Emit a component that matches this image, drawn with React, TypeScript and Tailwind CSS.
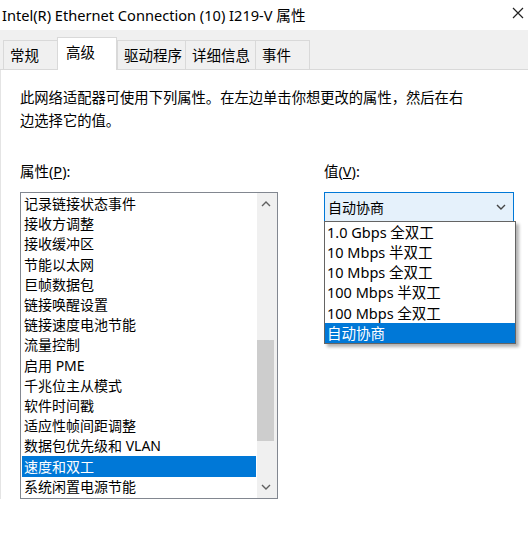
import type { FC } from 'react';

const font = { fontFamily: '"Noto Sans", "Noto Sans CJK SC", sans-serif' };

const tabs = [
  { label: '常规', w: 'w-[54px]' },
  { label: '高级', w: 'w-[60px]', active: true },
  { label: '驱动程序', w: 'w-[68px]' },
  { label: '详细信息', w: 'w-[70px]' },
  { label: '事件', w: 'w-[55px]' },
];

const properties = [
  '记录链接状态事件',
  '接收方调整',
  '接收缓冲区',
  '节能以太网',
  '巨帧数据包',
  '链接唤醒设置',
  '链接速度电池节能',
  '流量控制',
  '启用 PME',
  '千兆位主从模式',
  '软件时间戳',
  '适应性帧间距调整',
  '数据包优先级和 VLAN',
  '速度和双工',
  '系统闲置电源节能',
];

const values = [
  '1.0 Gbps 全双工',
  '10 Mbps 半双工',
  '10 Mbps 全双工',
  '100 Mbps 半双工',
  '100 Mbps 全双工',
  '自动协商',
];

const Chevron: FC<{ up?: boolean; className?: string }> = ({ up, className }) => (
  <svg width="10" height="6" viewBox="0 0 10 6" className={className}>
    <path
      d={up ? 'M1 5 L5 1 L9 5' : 'M1 1 L5 5 L9 1'}
      fill="none"
      stroke="currentColor"
      strokeWidth="1.4"
    />
  </svg>
);

const App: FC = () => {
  return (
    <div className="relative h-[538px] w-[528px] overflow-hidden bg-white text-black" style={font}>
      {/* Title bar */}
      <div className="flex h-[30px] items-center justify-between pl-[2px] pr-[4px]">
        <span className="text-[14.6px] leading-none">Intel(R) Ethernet Connection (10) I219-V 属性</span>
        <svg width="12" height="12" viewBox="0 0 12 12" className="mb-[4px] text-[#222]">
          <path d="M1 1 L11 11 M11 1 L1 11" stroke="currentColor" strokeWidth="1.2" />
        </svg>
      </div>

      {/* Tab strip */}
      <div className="flex h-[40px] items-end border-b border-[#d9d9d9] bg-[#f0f0f0] pl-[3px]">
        {tabs.map((t) =>
          t.active ? (
            <div
              key={t.label}
              className={`${t.w} relative z-10 -mb-px flex h-[33px] items-start border-x border-t border-[#d9d9d9] bg-white pl-[8px] pt-[4px] text-[14.5px]`}
            >
              {t.label}
            </div>
          ) : (
            <div
              key={t.label}
              className={`${t.w} flex h-[29px] items-center border-y-0 border-l border-t border-[#d9d9d9] bg-[#f0f0f0] pl-[6px] pt-[2px] text-[14.5px] last:border-r`}
            >
              {t.label}
            </div>
          )
        )}
      </div>

      {/* Content */}
      <div className="border-l border-[#e4e4e4] px-[19px] pt-[16px]">
        <p className="text-[14.3px] leading-[23px]">
          此网络适配器可使用下列属性。在左边单击你想更改的属性，然后在右
          <br />
          边选择它的值。
        </p>

        <div className="mt-[29px] flex gap-[46px]">
          {/* Properties */}
          <div>
            <div className="text-[14.5px] leading-[20px]">
              属性(<span className="underline">P</span>):
            </div>
            <div className="mt-[11px] flex h-[307px] w-[258px] border border-[#828790] bg-white">
              <div className="flex-1 pl-[1px] pr-[1px] pt-[1px]">
                {properties.map((p) => (
                  <div
                    key={p}
                    className={`flex h-[20.2px] items-center pl-[2px] text-[14px] leading-none ${
                      p === '速度和双工' ? 'bg-[#0078d7] text-white' : ''
                    }`}
                  >
                    {p}
                  </div>
                ))}
              </div>
              <div className="flex w-[20px] flex-col items-center bg-[#f0f0f0] pr-[3px]">
                <div className="flex h-[22px] items-center text-[#606060]">
                  <Chevron up />
                </div>
                <div className="mt-[125px] h-[101px] w-full bg-[#cdcdcd]" />
                <div className="flex-1" />
                <div className="flex h-[22px] items-center text-[#606060]">
                  <Chevron />
                </div>
              </div>
            </div>
          </div>

          {/* Value */}
          <div className="relative">
            <div className="text-[14.5px] leading-[20px]">
              值(<span className="underline">V</span>):
            </div>
            <div className="mt-[11px] flex h-[30px] w-[190px] items-center justify-between border border-[#0078d7] bg-[#e5f1fb] pl-[3px] pr-[7px]">
              <span className="text-[14px]">自动协商</span>
              <Chevron className="text-[#444]" />
            </div>
            {/* Open dropdown list */}
            <div className="absolute left-0 top-[60px] z-20 w-[192px] border border-[#646464] bg-white shadow-[3px_3px_3px_rgba(0,0,0,0.3)]">
              {values.map((v) => (
                <div
                  key={v}
                  className={`flex h-[20.2px] items-center pl-[2px] text-[14.5px] leading-none ${
                    v === '自动协商' ? 'bg-[#0078d7] text-white' : ''
                  }`}
                >
                  {v}
                </div>
              ))}
            </div>
          </div>
        </div>
      </div>
    </div>
  );
};

export default App;
